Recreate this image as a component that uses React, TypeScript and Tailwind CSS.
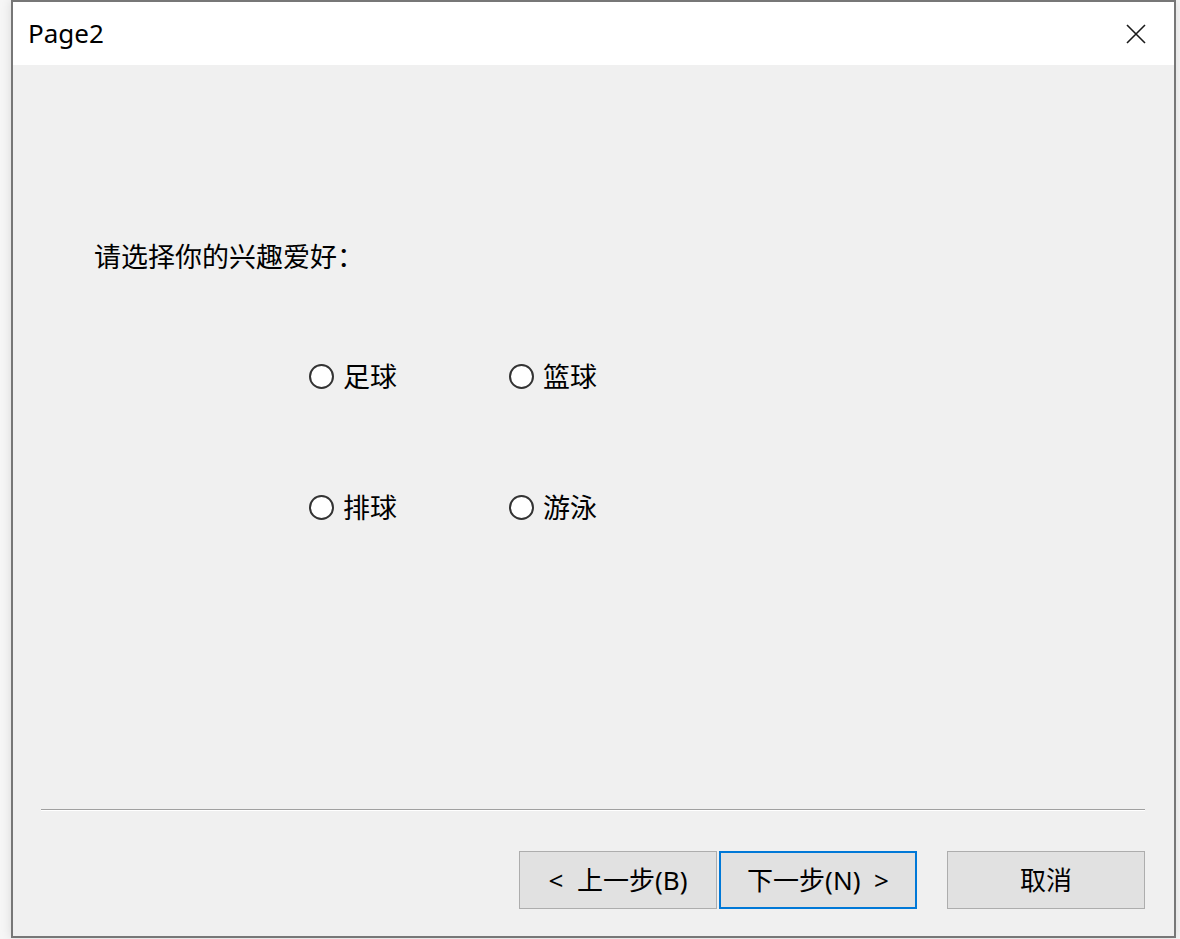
const FONT = "font-['Noto_Sans','Noto_Sans_CJK_SC',sans-serif]";

function Radio({ label }: { label: string }) {
  return (
    <label className="flex h-[40px] items-center gap-[9px]">
      <span className="h-[25px] w-[25px] rounded-full border-2 border-[#333333] bg-white" />
      <span className="text-[27px] leading-none text-black">{label}</span>
    </label>
  );
}

function WizardButton({
  children,
  focused = false,
}: {
  children: React.ReactNode;
  focused?: boolean;
}) {
  return (
    <button
      type="button"
      className={
        focused
          ? "flex h-[58px] w-[198px] items-center justify-center border-2 border-[#0078d7] bg-[#e1e1e1] text-[26px] text-black"
          : "flex h-[58px] w-[198px] items-center justify-center border border-[#adadad] bg-[#e1e1e1] text-[26px] text-black"
      }
    >
      {children}
    </button>
  );
}

export default function App() {
  return (
    <div className={`flex h-[939px] w-[1180px] bg-[#f6f6f6] ${FONT}`}>
      <div className="ml-[11px] flex h-[938px] w-[1165px] flex-col border-2 border-[#777777] shadow-[0_0_10px_rgba(0,0,0,0.12)]">
        {/* Title bar */}
        <div className="flex h-[63px] items-center justify-between bg-white pl-[15px] pr-[28px]">
          <span className="text-[26px] text-black">Page2</span>
          <svg width="20" height="20" viewBox="0 0 20 20" className="text-[#1a1a1a]">
            <path d="M1 1 L19 19 M19 1 L1 19" stroke="currentColor" strokeWidth="1.6" />
          </svg>
        </div>

        {/* Page body */}
        <div className="flex flex-1 flex-col bg-[#f0f0f0]">
          <p className="pl-[81px] pt-[175px] text-[27px] leading-[34px] text-black">
            请选择你的兴趣爱好：
          </p>

          <div className="ml-[296px] mt-[82px] grid grid-cols-[200px_200px] gap-y-[91px]">
            <Radio label="足球" />
            <Radio label="篮球" />
            <Radio label="排球" />
            <Radio label="游泳" />
          </div>

          <div className="flex-1" />

          <div className="ml-[28px] mr-[29px] border-t border-b border-t-[#a0a0a0] border-b-white" />

          <div className="mt-[40px] flex justify-end pb-[27px] pr-[29px]">
            <div className="flex gap-[2px]">
              <WizardButton>&lt;&nbsp; 上一步(B)</WizardButton>
              <WizardButton focused>下一步(N)&nbsp; &gt;</WizardButton>
            </div>
            <div className="ml-[30px]">
              <WizardButton>取消</WizardButton>
            </div>
          </div>
        </div>
      </div>
    </div>
  );
}
